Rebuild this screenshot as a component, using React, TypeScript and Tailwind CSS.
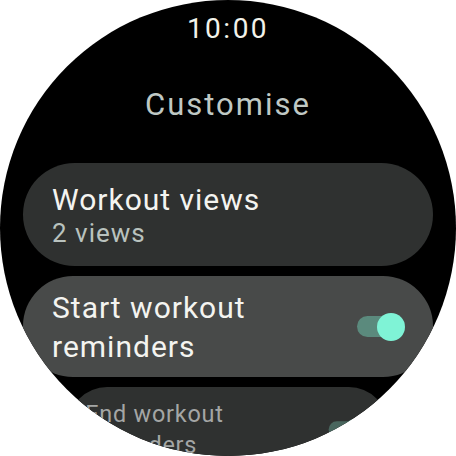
import React from 'react';

function Toggle({ dim = false }: { dim?: boolean }) {
  return (
    <div className={`relative w-[48px] h-[28px] shrink-0 flex items-center ${dim ? 'opacity-60' : ''}`}>
      <div className="w-[42px] h-[21px] rounded-full bg-[#5b8a7d]" />
      <div className="absolute right-0 top-0 w-[28px] h-[28px] rounded-full bg-[#7ff3d6]" />
    </div>
  );
}

export default function App() {
  return (
    <div className="w-[456px] h-[456px] bg-white" style={{ fontFamily: 'Roboto, "Open Sans", sans-serif' }}>
      <div className="w-[456px] h-[456px] rounded-full bg-black overflow-hidden flex flex-col items-center">
        {/* Status time */}
        <div className="mt-[14px] text-[28px] leading-[30px] text-[#f2f2ea] tracking-[2.5px]">10:00</div>

        {/* Screen title */}
        <div className="mt-[42px] text-[31px] leading-[38px] text-[#bfc8c4] tracking-[2px]">Customise</div>

        {/* List */}
        <div className="mt-[39px] w-full px-[23px] flex flex-col gap-[10px]">
          <div className="h-[103px] rounded-full bg-[#2f3130] px-[29px] pt-[4px] flex flex-col justify-center">
            <div className="text-[30px] leading-[34px] text-[#f4f4f0] tracking-[1px]">Workout views</div>
            <div className="text-[26px] leading-[33px] text-[#b9c2be] tracking-[1px]">2 views</div>
          </div>

          <div className="h-[101px] rounded-[50px] bg-[#484a49] pl-[29px] pr-[28px] flex items-center justify-between">
            <div className="text-[30px] leading-[39px] text-[#f4f4f0] tracking-[1px]">
              Start workout
              <br />
              reminders
            </div>
            <Toggle />
          </div>

          {/* Partially scrolled-in item, shrunk at the bottom edge */}
          <div className="h-[101px] rounded-[50px] bg-[#2f3130] pl-[22px] pr-[28px] pt-[8px] flex items-center justify-between scale-[0.78] origin-top">
            <div className="text-[30px] leading-[40px] text-[#a4a6a5] tracking-[1px]">
              End workout
              <br />
              reminders
            </div>
            <Toggle dim />
          </div>
        </div>
      </div>
    </div>
  );
}
